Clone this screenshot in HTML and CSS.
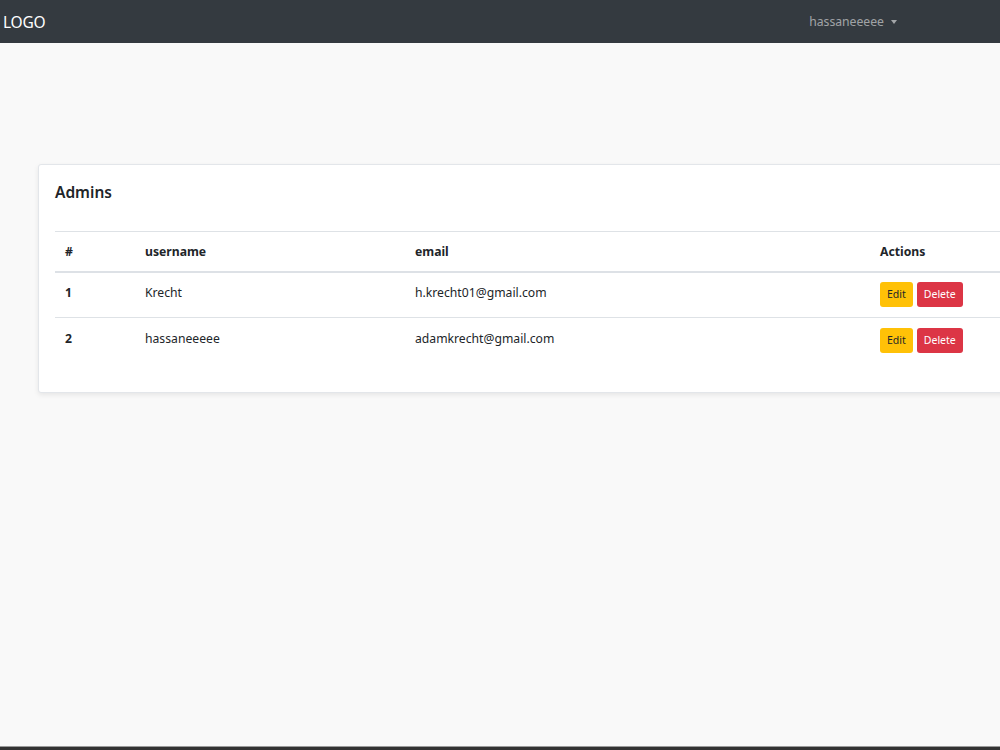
FILE: index.html
```html
<!DOCTYPE html>
<html>
<head>
<meta charset="utf-8">
<link rel="stylesheet" href="styles.css">
</head>
<body>
<div class="page">
  <nav class="navbar">
    <span class="brand">LOGO</span>
    <span class="user">hassaneeeee <span class="caret"></span></span>
  </nav>
  <main class="main">
    <section class="card">
      <h5 class="card-title">Admins</h5>
      <table class="table">
        <thead>
          <tr>
            <th class="c-num">#</th>
            <th class="c-user">username</th>
            <th class="c-email">email</th>
            <th class="c-actions">Actions</th>
          </tr>
        </thead>
        <tbody>
          <tr>
            <th class="c-num">1</th>
            <td>Krecht</td>
            <td>h.krecht01@gmail.com</td>
            <td><span class="btn btn-edit">Edit</span><span class="btn btn-delete">Delete</span></td>
          </tr>
          <tr class="last">
            <th class="c-num">2</th>
            <td>hassaneeeee</td>
            <td>adamkrecht@gmail.com</td>
            <td><span class="btn btn-edit">Edit</span><span class="btn btn-delete">Delete</span></td>
          </tr>
        </tbody>
      </table>
    </section>
  </main>
  <div class="bottom-bar"></div>
</div>
</body>
</html>
```

FILE: styles.css
```css
* { box-sizing: border-box; }
html, body { margin: 0; padding: 0; }
body {
  font-family: "Noto Sans", "Open Sans", sans-serif;
  background: #f9f9f9;
  color: #212529;
  overflow: hidden;
}
.page {
  height: 750px;
  display: flex;
  flex-direction: column;
}
.navbar {
  height: 43px;
  flex: none;
  background: #343a40;
  display: flex;
  align-items: center;
  justify-content: space-between;
  padding: 0 0 0 3px;
}
.brand {
  color: #fff;
  font-size: 15.5px;
  letter-spacing: -0.2px;
}
.user {
  color: rgba(255,255,255,0.55);
  font-size: 12.2px;
  margin-right: 103px;
  display: flex;
  align-items: center;
  gap: 5px;
}
.caret {
  width: 0; height: 0;
  border-left: 3.5px solid transparent;
  border-right: 3.5px solid transparent;
  border-top: 4px solid rgba(255,255,255,0.55);
  margin-left: 2px;
}
.main {
  flex: 1;
  padding: 121px 0 0 38px;
}
.card {
  width: 1000px;
  background: #fff;
  border: 1px solid #e3e6ea;
  border-radius: 3px;
  box-shadow: 0 2px 5px rgba(0,0,0,0.08);
  padding: 16px 16px 28px 16px;
}
.card-title {
  margin: 0;
  font-size: 15.5px;
  font-weight: 600;
  line-height: 20px;
  padding-top: 1px;
  margin-bottom: 29px;
}
.table {
  width: 100%;
  border-collapse: collapse;
  font-size: 12.2px;
}
.table th, .table td {
  text-align: left;
  padding: 0 10px;
  vertical-align: middle;
}
.table thead tr {
  height: 40px;
  border-top: 1px solid #dee2e6;
  border-bottom: 2px solid #dde1e6;
}
.table thead th { font-weight: 700; }
.table tbody tr {
  height: 46px;
  border-bottom: 1px solid #dee2e6;
}
.table tbody tr.last { border-bottom: none; }
.table tbody th { font-weight: 700; padding-bottom: 4px; }
.table tbody td { padding-bottom: 4px; }
.c-num { width: 80px; }
.c-user { width: 270px; }
.c-email { width: 465px; }
.btn {
  display: inline-block;
  font-size: 10.5px;
  line-height: 25px;
  height: 25px;
  padding: 0 7px;
  border-radius: 3px;
  vertical-align: middle;
  margin-top: 4px;
}
.btn-edit {
  background: #ffc107;
  color: #212529;
  margin-right: 4px;
}
.btn-delete {
  background: #dc3545;
  color: #fff;
}
.bottom-bar {
  height: 4px;
  flex: none;
  background: #333;
  border-top: 1px solid #9a9a9a;
}
```
